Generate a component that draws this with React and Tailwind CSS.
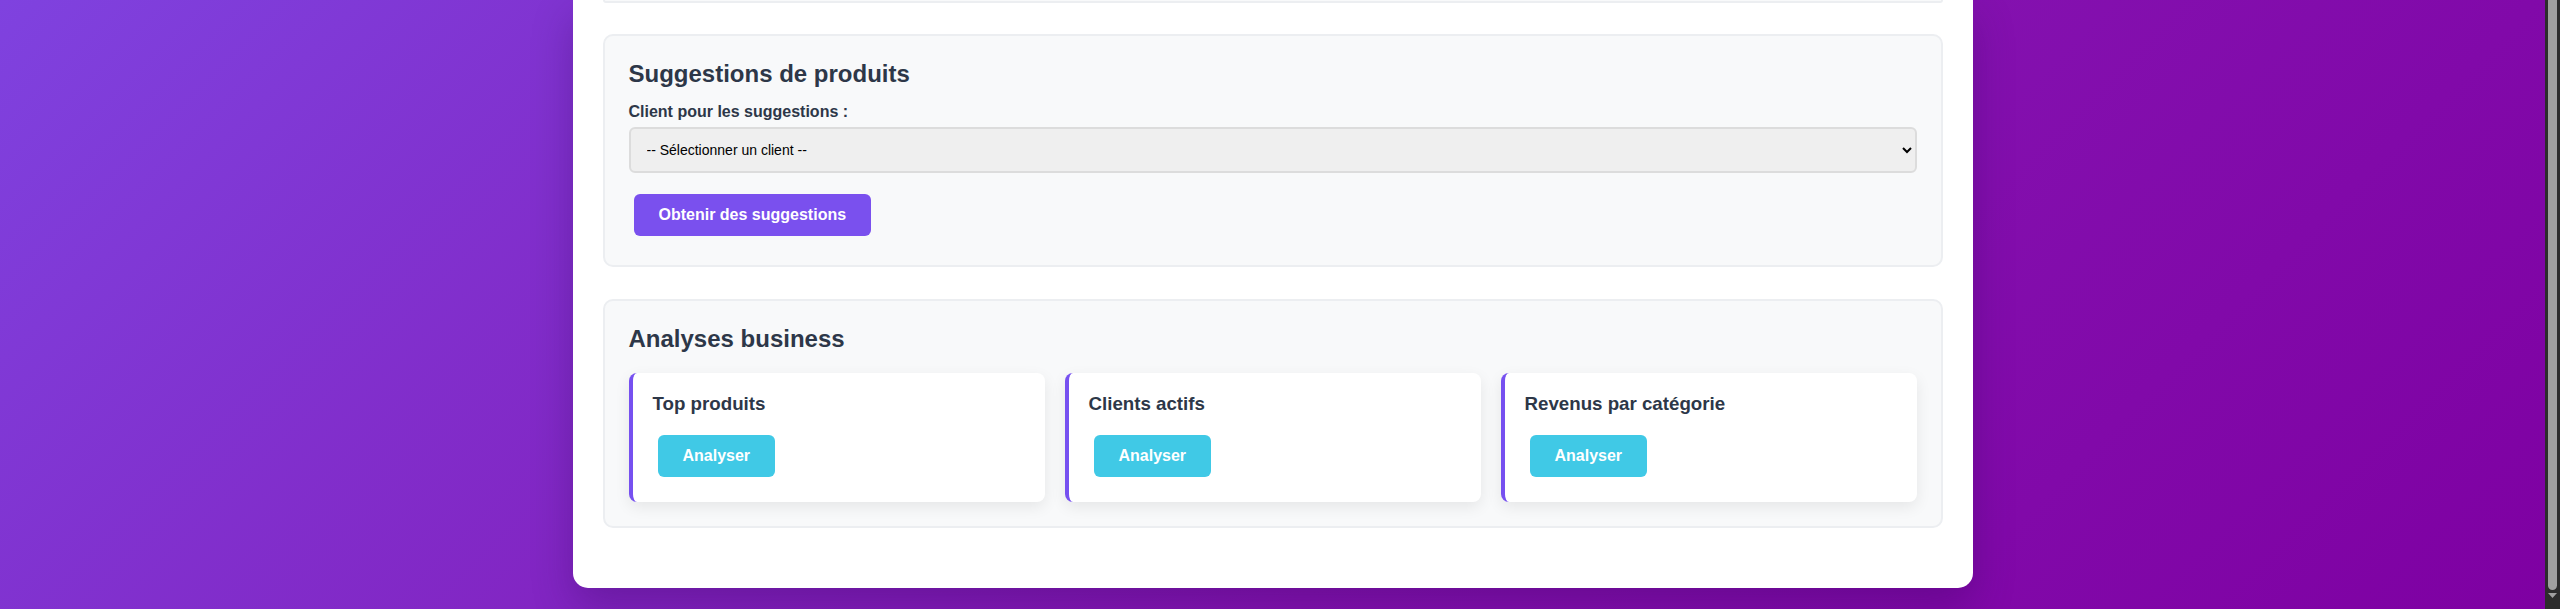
import React, { useState } from 'react';

const analyses = [
    { id: 'top-products', title: 'Top produits' },
    { id: 'active-clients', title: 'Clients actifs' },
    { id: 'revenue-category', title: 'Revenus par catégorie' },
];

const App = () => {
    const [client, setClient] = useState('');

    return (
        <div className="flex h-[609px] overflow-hidden bg-[linear-gradient(135deg,#7f42df_0%,#8412b0_60%,#7e00a2_100%)] font-['Liberation_Sans',Arial,sans-serif]">
            <div className="flex-1 flex justify-center">
                <div className="w-[1400px] h-fit bg-white rounded-b-[15px] px-[30px] pb-[30px] shadow-[0_18px_40px_rgba(40,0,80,0.28)]">

                    {/* tail of the previous section */}
                    <div className="h-[3px] bg-[#f8f9fa] border-x-2 border-b-2 border-[#eceef1] rounded-b-[10px]" />

                    {/* Suggestions */}
                    <section className="mt-[31px] mb-[32px] bg-[#f8f9fa] border-2 border-[#eceef1] rounded-[10px] p-6">
                        <h2 className="text-[24px] leading-[28px] font-bold text-[#2d3748] mb-[15px]">Suggestions de produits</h2>
                        <label className="block text-[16px] leading-[18px] font-bold text-[#2d3748] mb-[6px]">Client pour les suggestions :</label>
                        <select value={client} onChange={e => setClient(e.target.value)}
                            className="block w-full h-[46px] mb-4 px-3 text-[14px] text-black bg-[#efefef] border-2 border-[#dcdcdc] rounded-md">
                            <option value="">-- Sélectionner un client --</option>
                        </select>
                        <button className="m-[5px] px-[25px] py-3 text-[16px] leading-[18px] font-bold text-white bg-[#7a50ee] rounded-md">
                            Obtenir des suggestions
                        </button>
                    </section>

                    {/* Analyses */}
                    <section className="mb-[30px] bg-[#f8f9fa] border-2 border-[#eceef1] rounded-[10px] p-6">
                        <h2 className="text-[24px] leading-[28px] font-bold text-[#2d3748] mb-5">Analyses business</h2>
                        <div className="grid grid-cols-3 gap-5">
                            {analyses.map(a => (
                                <div key={a.id} className="bg-white rounded-lg border-l-4 border-[#7650f0] p-5 shadow-[0_5px_15px_rgba(0,0,0,0.08)]">
                                    <h3 className="text-[18.72px] leading-[21.5px] font-bold text-[#2d3748] mb-[15px]">{a.title}</h3>
                                    <button className="m-[5px] px-[25px] py-3 text-[16px] leading-[18px] font-bold text-white bg-[#40c9e6] rounded-md">
                                        Analyser
                                    </button>
                                </div>
                            ))}
                        </div>
                    </section>
                </div>
            </div>

            {/* scrollbar */}
            <div className="w-[15px] bg-[#2c2c2c] flex flex-col items-center">
                <div className="w-[9px] h-[590px] bg-[#9f9f9f] rounded-b-full" />
                <svg width="9" height="6" viewBox="0 0 9 6" className="mt-[3px]">
                    <path d="M0 0 L9 0 L4.5 5 Z" fill="#9f9f9f" />
                </svg>
            </div>
        </div>
    );
};

export default App;
